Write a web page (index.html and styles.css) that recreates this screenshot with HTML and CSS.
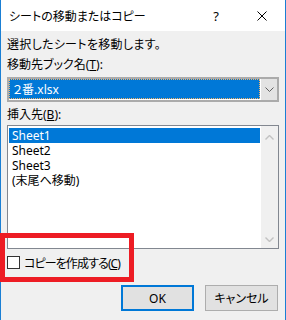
FILE: index.html
```html
<!DOCTYPE html>
<html lang="ja">
<head>
    <meta charset="UTF-8">
    <title>シートの移動またはコピー</title>
    <link rel="stylesheet" href="styles.css">
</head>
<body>
    <div class="dialog">
        <div class="titlebar">
            <div class="title">シートの移動またはコピー</div>
            <div class="caption-btn">?</div>
            <div class="caption-btn">
                <svg width="10" height="10" viewBox="0 0 10 10"><path d="M0.5 0.5L9.5 9.5M9.5 0.5L0.5 9.5" stroke="#000" stroke-width="1" fill="none"/></svg>
            </div>
        </div>

        <div class="body">
            <div class="label first">選択したシートを移動します。</div>
            <div class="label">移動先ブック名(<u>T</u>):</div>

            <!-- 移動先ブック -->
            <div class="combo">
                <div class="combo-value"><span>２番.xlsx</span></div>
                <div class="combo-btn">
                    <svg width="9" height="5" viewBox="0 0 9 5"><path d="M0.5 0.5L4.5 4.5L8.5 0.5" stroke="#606060" stroke-width="1" fill="none"/></svg>
                </div>
            </div>

            <div class="label">挿入先(<u>B</u>):</div>

            <!-- シート一覧 -->
            <div class="listbox">
                <div class="items">
                    <div class="item selected">Sheet1</div>
                    <div class="item">Sheet2</div>
                    <div class="item">Sheet3</div>
                    <div class="item">(末尾へ移動)</div>
                </div>
                <div class="scrollbar">
                    <svg width="9" height="5" viewBox="0 0 9 5"><path d="M0.5 4.5L4.5 0.5L8.5 4.5" stroke="#c2c2c2" stroke-width="1.4" fill="none"/></svg>
                    <svg width="9" height="5" viewBox="0 0 9 5"><path d="M0.5 0.5L4.5 4.5L8.5 0.5" stroke="#c2c2c2" stroke-width="1.4" fill="none"/></svg>
                </div>
            </div>

            <div class="check-row">
                <div class="checkbox"></div>
                <span class="check-label">コピーを作成する(<u>C</u>)</span>
            </div>

            <div class="buttons">
                <div class="btn default">OK</div>
                <div class="btn">キャンセル</div>
            </div>
        </div>

        <!-- 赤枠 -->
        <div class="highlight"></div>
    </div>
</body>
</html>
```

FILE: styles.css
```css
*{
    padding: 0;
    margin: 0;
    box-sizing: border-box;
}
body{
    width: 286px;
    height: 320px;
    overflow: hidden;
    background: #f0f0f0;
    font-family: "Noto Sans", "Noto Sans CJK JP", sans-serif;
    font-size: 12px;
    font-feature-settings: "palt";
    color: #000;
}
.dialog{
    width: 286px;
    height: 320px;
    position: relative;
    border-left: 1px solid #1a7fd4;
    border-right: 1px solid #1a7fd4;
}
/* タイトルバー */
.titlebar{
    height: 31px;
    background: #fff;
    display: flex;
    align-items: center;
}
.title{
    flex: 1;
    padding-left: 8px;
    padding-top: 1px;
    font-size: 12px;
}
.caption-btn{
    width: 46px;
    height: 31px;
    display: flex;
    align-items: center;
    justify-content: center;
    font-size: 13px;
}
.body{
    padding: 0 6px;
}
.label{
    line-height: 14px;
    height: 14px;
    margin-top: 6px;
}
.label.first{
    margin-top: 7px;
    letter-spacing: 0.3px;
}
u{
    text-decoration: underline;
    text-underline-offset: 1px;
}
/* コンボボックス */
.combo{
    margin-top: 5px;
    height: 25px;
    border: 2px solid #ababab;
    background: #fff;
    display: flex;
}
.combo-value{
    flex: 1;
    background: #0078d7;
    margin: 0 1px 1px 0;
    outline: 1px dotted #f2b36a;
    outline-offset: -1px;
    color: #fff;
    padding-left: 4px;
    display: flex;
    align-items: center;
}
.combo-btn{
    width: 16px;
    background: #e3e3e3;
    display: flex;
    align-items: center;
    justify-content: center;
}
/* リストボックス */
.listbox{
    margin-top: 3px;
    height: 124px;
    border: 1px solid #828790;
    background: #fff;
    display: flex;
}
.items{
    flex: 1;
    padding: 2px 1px 0 1px;
}
.item{
    height: 15px;
    line-height: 15px;
    padding-left: 3px;
}
.item.selected{
    background: #0078d7;
    color: #fff;
}
.scrollbar{
    width: 17px;
    background: #f0f0f0;
    display: flex;
    flex-direction: column;
    justify-content: space-between;
    align-items: center;
    padding: 9px 0 6px;
}
/* チェックボックス */
.check-row{
    margin-top: 7px;
    height: 13px;
    display: flex;
    align-items: center;
    gap: 4px;
}
.checkbox{
    width: 13px;
    height: 13px;
    border: 1px solid #333;
    background: #fff;
}
.check-label{
    letter-spacing: -0.9px;
}
/* ボタン */
.buttons{
    margin-top: 16px;
    display: flex;
    justify-content: flex-end;
    gap: 11px;
    padding-right: 1px;
}
.btn{
    width: 73px;
    height: 26px;
    border: 1px solid #adadad;
    background: #e1e1e1;
    display: flex;
    align-items: center;
    justify-content: center;
}
.btn.default{
    border: 2px solid #0078d7;
}
/* 赤枠（注釈） */
.highlight{
    position: absolute;
    left: -1px;
    top: 233px;
    width: 134px;
    height: 49px;
    border: 5px solid #ed1c24;
}
```
